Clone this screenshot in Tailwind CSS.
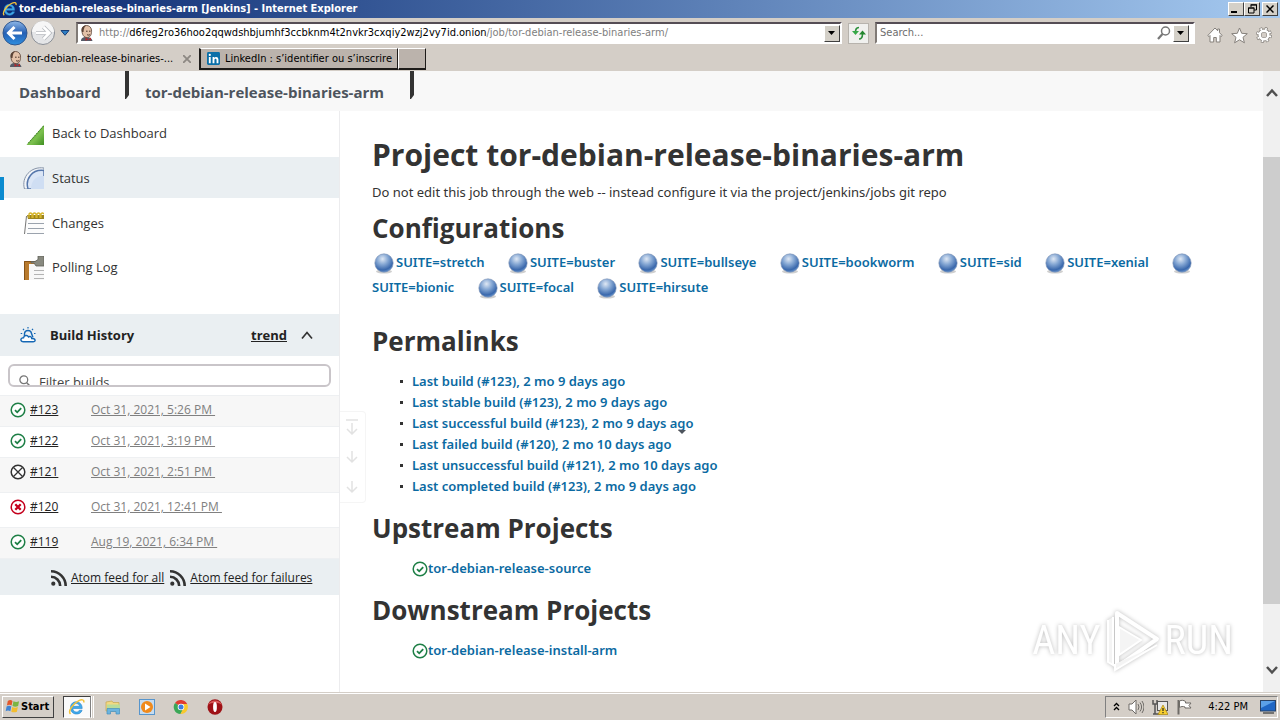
<!DOCTYPE html>
<html lang="en">
  <head>
    <meta charset="UTF-8" />
    <meta name="viewport" content="width=device-width, initial-scale=1.0" />
    <title>tor-debian-release-binaries-arm [Jenkins]</title>
    <!-- Tailwind CSS -->
    <script src="https://cdn.jsdelivr.net/npm/@tailwindcss/browser@4"></script>
  </head>
  <body class="flex h-screen flex-col overflow-hidden bg-white font-['DejaVu_Sans_Condensed','DejaVu_Sans',sans-serif] text-[11px] leading-4 text-black">
    <!-- Shared icons -->
    <svg class="absolute size-0">
      <defs>
        <radialGradient id="ball-fill" cx="0.42" cy="0.28" r="0.75">
          <stop offset="0" stop-color="#dfe8f4" />
          <stop offset="0.4" stop-color="#86a8d4" />
          <stop offset="0.8" stop-color="#3a68ac" />
          <stop offset="1" stop-color="#6d9bd2" />
        </radialGradient>
        <linearGradient id="nav-blue" x1="0" y1="0" x2="0" y2="1">
          <stop offset="0" stop-color="#8fb8e8" />
          <stop offset="0.5" stop-color="#2560b4" />
          <stop offset="1" stop-color="#2f8fe0" />
        </linearGradient>
        <linearGradient id="green-fill" x1="0" y1="0" x2="1" y2="1">
          <stop offset="0" stop-color="#4a9a2c" />
          <stop offset="0.6" stop-color="#7cc04e" />
          <stop offset="1" stop-color="#3f8f22" />
        </linearGradient>
      </defs>
      <symbol id="ball" viewBox="0 0 22 22">
        <ellipse cx="11" cy="19.500" rx="8" ry="2" fill="#cfcfcf" />
        <circle cx="11" cy="11" r="9.200" fill="url(#ball-fill)" stroke="#7f93b5" stroke-width="0.600" />
      </symbol>
      <symbol id="success" viewBox="0 0 16 16">
        <circle cx="8" cy="8" r="6.800" fill="#fff" stroke="#1e7f46" stroke-width="1.500" />
        <path d="M5 8.200l2.200 2.100 4-4.200" fill="none" stroke="#1e7f46" stroke-width="1.800" />
      </symbol>
      <symbol id="aborted" viewBox="0 0 16 16">
        <circle cx="8" cy="8" r="6.800" fill="#fff" stroke="#333" stroke-width="1.500" />
        <path d="M3.500 3.500l9 9M12.500 3.500l-9 9" stroke="#333" stroke-width="1.300" />
      </symbol>
      <symbol id="failed" viewBox="0 0 16 16">
        <circle cx="8" cy="8" r="6.800" fill="#fff" stroke="#c4001d" stroke-width="1.500" />
        <path d="M5.300 5.300l5.400 5.400M10.700 5.300l-5.400 5.400" stroke="#c4001d" stroke-width="2.300" />
      </symbol>
      <symbol id="rss" viewBox="0 0 16 16">
        <circle cx="2.300" cy="13.700" r="2.100" fill="#333" />
        <path d="M0 6.800a9.200 9.200 0 0 1 9.200 9.200M0 1.300a14.700 14.700 0 0 1 14.700 14.700" fill="none" stroke="#333" stroke-width="2.600" />
      </symbol>
      <symbol id="ie" viewBox="0 0 18 18">
        <path d="M14.200 10.500H4.800c.3 4 5.400 4.600 6.600 1.700h2.700c-1.300 5.500-11.600 5.600-11.600-2.500 0-8.200 12-7.800 11.700.8z M5 8.300h6.500c-.4-3.600-6-3.600-6.500 0z" fill="#3fa9ea" stroke="#2b86cc" stroke-width="0.600" fill-rule="evenodd" />
        <path d="M2.500 16C-.5 13.500 5 5.500 10.500 2.800c3-1.500 6-1.500 5.200 1.700" fill="none" stroke="#f3c33c" stroke-width="1.500" />
      </symbol>
      <symbol id="butler" viewBox="0 0 16 16">
        <path d="M2 16c0-3 2-4 5-4 4 0 6 1.500 6.500 4z" fill="#565c68" />
        <path d="M3 5c0-6 9-6 9.500 0 .3 3.500-.5 7-4 7.600C4.500 12.800 2.800 9 3 5z" fill="#e3c1a8" stroke="#5b4336" stroke-width="0.800" />
        <path d="M3 7C1.500 3 4 .5 7.500.6 5.500 1.600 5 3 4.500 7z" fill="#5b4336" />
        <path d="M7 6.200h1.600M10 6.200h1.500M8 9.500c1 .8 2 .8 3 0" stroke="#4b3328" stroke-width="1" fill="none" />
        <path d="M6.500 12.500l3 2 2.500-2v3l-2.500-1-3 1.200z" fill="#b5282c" />
      </symbol>
      <symbol id="caret" viewBox="0 0 8 4">
        <path d="M0 0h7L3.500 4z" fill="#000" />
      </symbol>
    </svg>

    <!-- Title bar -->
    <header class="flex h-[18px] shrink-0 items-center bg-linear-to-r from-[#0c2870] to-[#a6caf0] px-[2px]">
      <svg class="mr-px size-4"><use href="#ie" /></svg>
      <h1 class="grow font-bold text-white">tor-debian-release-binaries-arm [Jenkins] - Internet Explorer</h1>
      <button aria-label="Minimize" class="flex h-[14px] w-4 items-end justify-start border border-t-white border-r-[#404040] border-b-[#404040] border-l-white bg-[#d4d0c8] p-[2px]"><span class="h-[2px] w-[6px] bg-black"></span></button>
      <button aria-label="Restore" class="flex h-[14px] w-4 items-center justify-center border border-t-white border-r-[#404040] border-b-[#404040] border-l-white bg-[#d4d0c8]">
        <svg class="h-[10px] w-[9px] shrink-0" viewBox="0 0 9 10"><path d="M3 3V1h5.500v5H6M2.500.8H9M.5 4h5.500v5H.5zM0 4h6.500" fill="none" stroke="#000" /></svg>
      </button>
      <button aria-label="Close" class="ml-[2px] flex h-[14px] w-4 items-center justify-center border border-t-white border-r-[#404040] border-b-[#404040] border-l-white bg-[#d4d0c8]">
        <svg class="size-2 shrink-0" viewBox="0 0 8 8"><path d="M.5.5l7 7M7.500.5l-7 7" stroke="#000" stroke-width="1.500" /></svg>
      </button>
    </header>

    <!-- Address bar -->
    <div class="flex h-[29px] shrink-0 items-center bg-[#d4cec7] pt-px pr-2 pl-[2px]">
      <button aria-label="Back" class="size-[26px]">
        <svg viewBox="0 0 26 26"><circle cx="13" cy="13" r="12" fill="url(#nav-blue)" stroke="#31588f" /><path d="M20 13H7M12.500 7L6.500 13l6 6" fill="none" stroke="#fff" stroke-width="3" /></svg>
      </button>
      <button aria-label="Forward" class="ml-[2px] size-[26px]">
        <svg viewBox="0 0 26 26"><circle cx="13" cy="13" r="11.500" fill="#e4e5e7" stroke="#8b8f96" /><path d="M2 12a11 11 0 0 1 22 0z" fill="#f6f6f6" /><path d="M6 13h13M13.500 7l6 6-6 6" fill="none" stroke="#b4b7bc" stroke-width="4" /><path d="M6 13h13M13.500 7l6 6-6 6" fill="none" stroke="#fff" stroke-width="2.500" /></svg>
      </button>
      <button aria-label="Recent pages" class="mx-1 w-[10px]">
        <svg viewBox="0 0 10 6"><path d="M1 .5h8L5 5.300z" fill="#2f7fc4" stroke="#173f78" /></svg>
      </button>
      <div class="ml-[2px] flex h-[22px] grow items-center border-2 border-t-[#554d55] border-r-white border-b-white border-l-[#807a76] bg-white">
        <svg class="mx-px size-4 shrink-0"><use href="#butler" /></svg>
        <a href="#" class="grow pl-[3px] whitespace-nowrap text-[#808080]">http://<span class="text-black">d6feg2ro36hoo2qqwdshbjumhf3ccbknm4t2nvkr3cxqiy2wzj2vy7id.onion</span>/job/tor-debian-release-binaries-arm/</a>
        <button aria-label="Show addresses" class="flex h-[17px] w-4 items-center justify-center border border-t-white border-r-[#404040] border-b-[#404040] border-l-white bg-[#d4d0c8]"><svg class="h-1 w-2"><use href="#caret" /></svg></button>
      </div>
      <button aria-label="Refresh" class="mx-[6px] flex size-[21px] items-center justify-center border border-[#b7b3ad] bg-[#f0f0ee]">
        <svg class="size-4" viewBox="0 0 16 16"><path d="M8 2.500C5 2.500 4.500 4.500 4.500 7.500" stroke="#2b8f3a" stroke-width="1.600" fill="none" /><path d="M1 6l3.500 4L8 6z" fill="#35a846" /><path d="M8 14c3 0 3.500-2 3.500-5" stroke="#2b8f3a" stroke-width="1.600" fill="none" /><path d="M8 9.500l3.500-4 3.500 4z" fill="#23862f" /></svg>
      </button>
      <div class="flex h-[22px] w-[320px] items-center border-2 border-t-[#554d55] border-r-white border-b-white border-l-[#807a76] bg-white pr-1">
        <input type="text" aria-label="Search" placeholder="Search..." class="w-0 grow pl-[3px] placeholder:text-[#6d6d6d] outline-none" />
        <svg class="mr-[2px] size-[14px]" viewBox="0 0 14 14"><circle cx="8.500" cy="5" r="4" fill="none" stroke="#777" stroke-width="1.500" /><path d="M5.500 8L1 13" stroke="#777" stroke-width="2.200" /></svg>
        <button aria-label="Search providers" class="flex h-[17px] w-4 items-center justify-center border border-t-white border-r-[#404040] border-b-[#404040] border-l-white bg-[#d4d0c8]"><svg class="h-1 w-2"><use href="#caret" /></svg></button>
      </div>
      <div class="ml-3 flex items-center gap-2 pt-1">
        <button aria-label="Home"><svg class="size-4" viewBox="0 0 16 16"><path d="M8 1L.8 8.500l1.200 1 1-1V15h3.700v-4.500h2.600V15H13V8.500l1 1 1.200-1-2.700-2.800V2h-1.800v1.800z" fill="#fff" stroke="#85807b" /></svg></button>
        <button aria-label="Favorites"><svg class="size-[17px]" viewBox="0 0 17 17"><path d="M8.500 1l2.200 5.300 5.600.4-4.300 3.600 1.400 5.500-4.900-3-4.900 3L5 10.300.7 6.700l5.600-.4z" fill="#fff" stroke="#85807b" /></svg></button>
        <button aria-label="Tools"><svg class="size-4" viewBox="0 0 16 16"><circle cx="8" cy="8" r="6.200" fill="none" stroke="#85807b" stroke-width="3.500" stroke-dasharray="2.600 2.270" /><circle cx="8" cy="8" r="4.500" fill="none" stroke="#85807b" stroke-width="4" /><circle cx="8" cy="8" r="6.200" fill="none" stroke="#fff" stroke-width="2.200" stroke-dasharray="1.600 3.270" stroke-dashoffset="-0.500" /><circle cx="8" cy="8" r="4.300" fill="none" stroke="#fff" stroke-width="2.500" /></svg></button>
      </div>
    </div>

    <!-- Tabs -->
    <nav class="flex h-6 shrink-0 bg-[#d4cec7] pt-px pb-px">
      <div class="flex w-[199px] items-center pr-2 pl-2">
        <svg class="size-4 shrink-0"><use href="#butler" /></svg>
        <a href="#" class="grow pl-[3px] whitespace-nowrap">tor-debian-release-binaries-...</a>
        <button aria-label="Close tab"><svg class="size-2" viewBox="0 0 8 8"><path d="M0 0l8 8M8 0L0 8" stroke="#8d8883" stroke-width="1.800" /></svg></button>
      </div>
      <a href="#" class="flex w-[199px] items-center border-r border-b-2 border-l-2 border-t border-[#1d1b19] border-t-white bg-[#bbb3ac] pl-[6px] whitespace-nowrap">
        <svg class="mr-[5px] size-[13px] shrink-0" viewBox="0 0 14 14"><rect width="14" height="14" rx="1.500" fill="#0a6fa8" /><path d="M2 5.500h2V12H2zM6 5.500h2V12H6zM8 8.500c0-1.800 2.300-1.700 2.300 0V12h2V8c0-3.300-3.600-3.300-4.300-1.500z" fill="#fff" /><circle cx="3" cy="3.200" r="1.200" fill="#fff" /></svg>
        LinkedIn : s’identifier ou s’inscrire
      </a>
      <button aria-label="New tab" class="w-7 border-t border-r border-b-2 border-l border-[#1d1b19] border-t-white border-l-white bg-[#bbb3ac]"></button>
    </nav>

    <!-- Browser viewport -->
    <div class="flex min-h-0 grow font-['Open_Sans',sans-serif] text-[13px] leading-[21px] text-[#333]">
      <div class="flex min-w-0 grow flex-col">
        <nav class="flex h-10 shrink-0 bg-[#f8f8f8] pl-[19px] text-[15px] font-bold text-[#4d545d]">
          <a href="#" class="w-[106px] pt-[11px]">Dashboard</a>
          <svg class="h-7 w-1" viewBox="0 0 4 28"><path d="M0 0h4v24l-3 4H0z" fill="#333" /></svg>
          <a href="#" class="w-[281px] pt-[11px] pl-4 whitespace-nowrap">tor-debian-release-binaries-arm</a>
          <svg class="h-7 w-1" viewBox="0 0 4 28"><path d="M0 0h4v24l-3 4H0z" fill="#333" /></svg>
        </nav>

        <div class="flex min-h-0 grow">
          <!-- Sidebar -->
          <aside class="w-[340px] shrink-0 border-r border-[#ececee]">
            <nav class="flex flex-col gap-1 pt-px">
              <a href="#" class="flex h-[41px] items-center pt-px pl-6">
                <svg class="mt-1 mr-2 size-5" viewBox="0 0 20 20"><path d="M20 0v20H2.500z" fill="url(#green-fill)" /><path d="M19.500 1L3.500 19" stroke="#3a7a22" stroke-dasharray="2 1" /></svg>
                Back to Dashboard
              </a>
              <a href="#" class="relative flex h-[41px] items-center bg-[#eaeff2] pt-px pl-[23px]">
                <span class="absolute top-5 left-0 h-[23px] w-1 bg-[#0b8bd0]"></span>
                <svg class="mr-2 h-[22px] w-[21px]" viewBox="0 0 21 22"><path d="M21 1C8-1-2 10 1.500 22H21z" fill="#f2f5f9" stroke="#8794a8" /><path d="M21 3.500C9 2 2 12 5 22h16z" fill="#dbe6f6" stroke="#5576ab" stroke-width="1.500" /><path d="M21 9c-8-1-13 5-13 13h13z" fill="#cfdef3" /></svg>
                Status
              </a>
              <a href="#" class="flex h-[41px] items-center pt-px pl-6">
                <svg class="mr-2 h-[22px] w-5" viewBox="0 0 20 22"><path d="M2.500 3.500H20V22H.5z" fill="#fcfcfc" /><path d="M2.500 4L.5 22" stroke="#777" /><path d="M4 11.500h16M4 16.500h16M3 21.500h17" stroke="#9ba3ad" /><path d="M3 3h17v4H4z" fill="#9b8420" /><path d="M5 6V2q1.500-2 3 0v4M9 6V2q1.500-2 3 0v4M13 6V2q1.500-2 3 0v4M17 6V2q1.500-2 3 0" fill="none" stroke="#d6b52c" stroke-width="1.300" /></svg>
                Changes
              </a>
              <a href="#" class="flex h-[41px] items-center pl-6">
                <svg class="mr-2 h-6 w-5" viewBox="0 0 20 24"><path d="M0 5h20v19H0z" fill="#b87a2d" /><path d="M.5 24V5.500H12" fill="none" stroke="#865318" /><path d="M5 8h15v16H5z" fill="#f7f7f7" /><path d="M10 14.500h10M10 18.500h10M10 22.500h10" stroke="#b3b3b3" /><path d="M7 5.500h4l3-2V0h6v10h-8l-2-3H7z" fill="#88897f" stroke="#5f6058" stroke-width="0.800" /></svg>
                Polling Log
              </a>
            </nav>

            <!-- Build history -->
            <section class="mt-[26px]">
              <div class="flex h-[42px] items-center bg-[#eaeff2] pr-[26px] pl-5 font-bold text-[#222]">
                <svg class="mr-[14px] size-4" viewBox="0 0 16 16"><path d="M3.500 14.800c-3.500 0-3.500-4 0-4 .4-2.600 4-3.300 5-.8 1.300-1 3.200-.3 3.200 1.500 4.300-.2 4.300 3.300 1.300 3.300z" fill="#fff" stroke="#1668b5" stroke-width="1.400" /><path d="M4.500 9V6.500c.5-4 6.500-4 7 0l1.500 4" fill="none" stroke="#1668b5" stroke-width="1.400" /><path d="M8 0v1.600M3 1.800l1 1.200M13 1.800l-1 1.200M.7 6.500h1.500M14 6.500h1.500" stroke="#1668b5" stroke-width="1.200" /></svg>
                <h2 class="grow">Build History</h2>
                <a href="#" class="underline">trend</a>
                <button aria-label="Collapse" class="ml-[14px]"><svg class="h-3 w-3" viewBox="0 0 12 12"><path d="M1 9.500l5-6 5 6" fill="none" stroke="#333" stroke-width="1.700" /></svg></button>
              </div>
              <label class="mx-2 mt-2 flex h-[23px] overflow-hidden rounded-md border-2 border-[#c9c5c9] pl-[9px]">
                <svg class="mt-[9px] mr-2 size-3 shrink-0" viewBox="0 0 12 12"><circle cx="4.800" cy="4.800" r="3.900" fill="none" stroke="#777" stroke-width="1.300" /><path d="M7.700 7.700L12 12" stroke="#777" stroke-width="1.500" /></svg>
                <input type="text" aria-label="Filter builds" placeholder="Filter builds" class="mt-[6px] h-[21px] grow placeholder:text-[#444] outline-none" />
              </label>
              <table class="mt-2 w-full text-xs">
                <tbody>
                  <tr class="h-[31px] border-y border-[#eef0f2] bg-[#f7f7f7]">
                    <td class="w-[91px] pb-[2px] pl-[10px]"><a href="#" class="flex items-center gap-1 text-[#222] underline"><svg class="size-4"><use href="#success" /></svg>#123</a></td>
                    <td class="pb-[2px]"><a href="#" class="text-[#808080] underline">Oct 31, 2021, 5:26 PM&nbsp;</a></td>
                  </tr>
                  <tr class="h-[31px] border-y border-[#eef0f2]">
                    <td class="pb-[2px] pl-[10px]"><a href="#" class="flex items-center gap-1 text-[#222] underline"><svg class="size-4"><use href="#success" /></svg>#122</a></td>
                    <td class="pb-[2px]"><a href="#" class="text-[#808080] underline">Oct 31, 2021, 3:19 PM&nbsp;</a></td>
                  </tr>
                  <tr class="h-[35px] border-y border-[#eef0f2] bg-[#f7f7f7]">
                    <td class="pb-[6px] pl-[10px]"><a href="#" class="flex items-center gap-1 text-[#222] underline"><svg class="size-4"><use href="#aborted" /></svg>#121</a></td>
                    <td class="pb-[6px]"><a href="#" class="text-[#808080] underline">Oct 31, 2021, 2:51 PM&nbsp;</a></td>
                  </tr>
                  <tr class="h-[35px] border-y border-[#eef0f2]">
                    <td class="pb-[6px] pl-[10px]"><a href="#" class="flex items-center gap-1 text-[#222] underline"><svg class="size-4"><use href="#failed" /></svg>#120</a></td>
                    <td class="pb-[6px]"><a href="#" class="text-[#808080] underline">Oct 31, 2021, 12:41 PM&nbsp;</a></td>
                  </tr>
                  <tr class="h-[31px] border-y border-[#eef0f2] bg-[#f7f7f7]">
                    <td class="pb-[2px] pl-[10px]"><a href="#" class="flex items-center gap-1 text-[#222] underline"><svg class="size-4"><use href="#success" /></svg>#119</a></td>
                    <td class="pb-[2px]"><a href="#" class="text-[#808080] underline">Aug 19, 2021, 6:34 PM&nbsp;</a></td>
                  </tr>
                </tbody>
              </table>
              <div class="flex h-9 items-center gap-[6px] bg-[#eaeff2] pt-[2px] pl-[51px] text-xs font-medium text-[#222]">
                <a href="#" class="flex items-center gap-1 whitespace-nowrap underline"><svg class="size-4"><use href="#rss" /></svg>Atom feed for all</a>
                <a href="#" class="flex items-center gap-1 whitespace-nowrap underline"><svg class="size-4"><use href="#rss" /></svg>Atom feed for failures</a>
              </div>
            </section>
          </aside>

          <!-- Project page -->
          <main class="relative min-w-0 grow px-8 pt-6 font-['Noto_Sans','Open_Sans',sans-serif]">
            <!-- Build history paging -->
            <div class="absolute top-[300px] left-0 flex h-[92px] w-[26px] flex-col items-center justify-around rounded-r border border-l-0 border-[#f5f5f5] bg-white pr-[2px]">
              <button aria-label="Newest"><svg class="size-4" viewBox="0 0 16 16"><path d="M2 1h12M8 4v11M3 10l5 5 5-5" fill="none" stroke="#e2e2e2" stroke-width="1.500" /></svg></button>
              <button aria-label="Newer"><svg class="size-4" viewBox="0 0 16 16"><path d="M8 2v11M3 8l5 5 5-5" fill="none" stroke="#e2e2e2" stroke-width="1.500" /></svg></button>
              <button aria-label="Older"><svg class="size-4" viewBox="0 0 16 16"><path d="M8 2v11M3 8l5 5 5-5" fill="none" stroke="#e2e2e2" stroke-width="1.500" /></svg></button>
            </div>

            <h1 class="font-['Open_Sans',sans-serif] text-[30px] leading-10 font-bold">Project tor-debian-release-binaries-arm</h1>
            <p class="mt-[7px]">Do not edit this job through the web -- instead configure it via the project/jenkins/jobs git repo</p>

            <h2 class="mt-[7px] font-['Open_Sans',sans-serif] text-[26px] leading-9 font-bold">Configurations</h2>
            <p class="mt-1 leading-[25px] font-semibold text-[#0b6aa2]">
              <svg class="mx-px inline size-[22px]"><use href="#ball" /></svg><a href="#" class="mr-[18px]">SUITE=stretch</a>
              <svg class="mx-px inline size-[22px]"><use href="#ball" /></svg><a href="#" class="mr-[18px]">SUITE=buster</a>
              <svg class="mx-px inline size-[22px]"><use href="#ball" /></svg><a href="#" class="mr-[18px]">SUITE=bullseye</a>
              <svg class="mx-px inline size-[22px]"><use href="#ball" /></svg><a href="#" class="mr-[18px]">SUITE=bookworm</a>
              <svg class="mx-px inline size-[22px]"><use href="#ball" /></svg><a href="#" class="mr-[18px]">SUITE=sid</a>
              <svg class="mx-px inline size-[22px]"><use href="#ball" /></svg><a href="#" class="mr-[18px]">SUITE=xenial</a>
              <svg class="mx-px inline size-[22px]"><use href="#ball" /></svg><a href="#" class="mr-[18px]">SUITE=bionic</a>
              <svg class="mx-px inline size-[22px]"><use href="#ball" /></svg><a href="#" class="mr-[18px]">SUITE=focal</a>
              <svg class="mx-px inline size-[22px]"><use href="#ball" /></svg><a href="#">SUITE=hirsute</a>
            </p>

            <h2 class="mt-[23px] font-['Open_Sans',sans-serif] text-[26px] leading-9 font-bold">Permalinks</h2>
            <ul class="mt-3 font-semibold text-[#0b6aa2]">
              <li class="flex items-center"><span class="mr-[9px] ml-7 size-[3px] bg-[#333]"></span><a href="#">Last build (#123), 2 mo 9 days ago</a></li>
              <li class="flex items-center"><span class="mr-[9px] ml-7 size-[3px] bg-[#333]"></span><a href="#">Last stable build (#123), 2 mo 9 days ago</a></li>
              <li class="flex items-center"><span class="mr-[9px] ml-7 size-[3px] bg-[#333]"></span><a href="#" class="relative">Last successful build (#123), 2 mo 9 days ago<svg class="absolute right-2 bottom-0 h-1 w-2" viewBox="0 0 8 4"><path d="M0 0h8L4 4z" fill="#4d545d" /></svg></a></li>
              <li class="flex items-center"><span class="mr-[9px] ml-7 size-[3px] bg-[#333]"></span><a href="#">Last failed build (#120), 2 mo 10 days ago</a></li>
              <li class="flex items-center"><span class="mr-[9px] ml-7 size-[3px] bg-[#333]"></span><a href="#">Last unsuccessful build (#121), 2 mo 10 days ago</a></li>
              <li class="flex items-center"><span class="mr-[9px] ml-7 size-[3px] bg-[#333]"></span><a href="#">Last completed build (#123), 2 mo 9 days ago</a></li>
            </ul>

            <h2 class="mt-[13px] font-['Open_Sans',sans-serif] text-[26px] leading-9 font-bold">Upstream Projects</h2>
            <a href="#" class="mt-3 ml-10 flex items-center font-semibold text-[#0b6aa2]"><svg class="size-4"><use href="#success" /></svg>tor-debian-release-source</a>

            <h2 class="mt-[13px] font-['Open_Sans',sans-serif] text-[26px] leading-9 font-bold">Downstream Projects</h2>
            <a href="#" class="mt-3 ml-10 flex items-center font-semibold text-[#0b6aa2]"><svg class="size-4"><use href="#success" /></svg>tor-debian-release-install-arm</a>

            <!-- Watermark -->
            <div class="absolute right-[30px] bottom-5 flex items-center gap-1 font-['Roboto_Condensed','Liberation_Sans_Narrow','Liberation_Sans',sans-serif] text-[40px] leading-[60px] text-white drop-shadow-[0_0_2px_#bbb]">
              <span>ANY</span>
              <svg class="h-[62px] w-14" viewBox="0 0 56 62"><path d="M12 3l40 26-40 28z" fill="none" stroke="#fff" stroke-width="4" stroke-linejoin="round" /><path d="M3 10v42l5 3V7M14 17l22 13-22 15zM10 54v6l42-25" fill="#f4f4f4" stroke="#fff" stroke-width="2" /></svg>
              <span>RUN</span>
            </div>
          </main>
        </div>
      </div>

      <!-- Scroll bar -->
      <div class="flex w-[17px] shrink-0 flex-col items-center bg-[#f0f0f0] py-4">
        <svg class="h-3 w-3 shrink-0" viewBox="0 0 12 12"><path d="M1 9l5-5.500L11 9" fill="none" stroke="#505050" stroke-width="2.500" /></svg>
        <div class="mt-[58px] mb-[60px] w-full grow bg-[#cdcdcd]"></div>
        <svg class="h-3 w-3 shrink-0" viewBox="0 0 12 12"><path d="M1 3l5 5.500L11 3" fill="none" stroke="#505050" stroke-width="2.500" /></svg>
      </div>
    </div>

    <!-- Taskbar -->
    <footer class="flex h-7 shrink-0 items-center border-t border-[#d4cec7] bg-[#d4cec7] px-[2px] shadow-[inset_0_1px_0_#fff]">
      <button class="flex h-[22px] w-[52px] items-center border border-t-white border-r-[#404040] border-b-[#404040] border-l-white pl-[2px] font-bold">
        <svg class="mr-px size-[15px] shrink-0" viewBox="0 0 16 16"><path d="M3 2c2-1.200 3.500-1 5 0L7 7c-1.500-1-3.500-1-5 0z" fill="#e2582c" /><path d="M9 2.500c2 1 4 1 6 0L14 7.500c-2 1-4 1-6 0z" fill="#7bb543" /><path d="M1.700 8c1.500-1 3.500-1 5 0l-1 5c-1.500-1-3.500-1-5 0z" fill="#3f84d4" /><path d="M7.700 8.500c2 1 4 1 6 0l-1 5c-2 1-4 1-6 0z" fill="#f3bd2f" /></svg>
        Start
      </button>
      <button aria-label="Internet Explorer" class="ml-[9px] flex h-[22px] w-7 items-center justify-center border border-t-[#404040] border-r-[#808080] border-b-white border-l-[#404040] bg-[#fafafa]"><svg class="size-[18px]"><use href="#ie" /></svg></button>
      <span class="h-[22px] w-[3px] border-x border-white"></span>
      <div class="ml-[11px] flex gap-[18px]">
        <button aria-label="Explorer"><svg class="size-4" viewBox="0 0 16 16"><path d="M1 3l6-1 1 1.500h6V12H1z" fill="#f2d982" stroke="#c4a650" stroke-width="0.700" /><path d="M2 5.500h13V10H2z" fill="#b9dc9b" /><path d="M2 15V9.500h12.500V15H11v-2.500H5.500V15z" fill="#6bb4df" stroke="#4690bd" stroke-width="0.700" /></svg></button>
        <button aria-label="Media Player"><svg class="size-4" viewBox="0 0 16 16"><rect x="0.500" y="0.500" width="15" height="15" fill="#c6dcf0" stroke="#5795cc" /><circle cx="8" cy="8" r="6" fill="#f08a1c" /><path d="M6 4.500L11.500 8 6 11.500z" fill="#fff" /></svg></button>
        <button aria-label="Chrome"><svg class="size-4" viewBox="0 0 16 16"><path d="M8 8L2 4a7 7 0 0 1 12.200 1H8z" fill="#e03c31" /><path d="M2 4a7 7 0 0 0 5.500 11l3-5.500L8 8z" fill="#3ba757" /><path d="M14.200 5A7 7 0 0 1 7.500 15L11 8 8 5z" fill="#f9c92d" /><circle cx="8" cy="8" r="3.300" fill="#fff" /><circle cx="8" cy="8" r="2.500" fill="#3d7de0" /></svg></button>
        <button aria-label="Opera"><svg class="size-4" viewBox="0 0 16 16"><ellipse cx="8" cy="8" rx="7.500" ry="7.700" fill="#9e1116" /><path d="M1 6c2-6 12-6 14 0-3-3-11-3-14 0z" fill="#d95a5a" /><ellipse cx="8" cy="8" rx="1.900" ry="5" fill="#fff" /></svg></button>
      </div>
      <div class="ml-auto flex h-[22px] items-center border border-t-[#808080] border-r-white border-b-white border-l-[#808080] pr-px pl-[6px]">
        <button aria-label="Show hidden icons"><svg class="size-[9px]" viewBox="0 0 9 9"><path d="M2 4l2.500-2.500L7 4M2 8l2.500-2.500L7 8" fill="none" stroke="#000" stroke-width="1.300" /></svg></button>
        <div class="ml-[7px] flex gap-2">
          <button aria-label="Volume"><svg class="size-4" viewBox="0 0 16 16"><path d="M1 5h3l4-4v14l-4-4H1z" fill="#fff" stroke="#6e6b67" /><path d="M10 5q2 3 0 6M12 3.500q3.200 4.500 0 9M14 2q4 6 0 12" fill="none" stroke="#6e6b67" /></svg></button>
          <button aria-label="Network"><svg class="size-4" viewBox="0 0 16 16"><rect x="5.500" y="2.500" width="10" height="9" fill="#e8e8e8" stroke="#555" /><path d="M1 1v4h4V1M3 5v10M1 15h7" fill="none" stroke="#555" stroke-width="1.500" /><path d="M11 6l5 9.500H6z" fill="#f7cf2f" stroke="#a98510" stroke-width="0.700" /><path d="M11 9v3M11 13v1.200" stroke="#222" stroke-width="1.200" /></svg></button>
          <button aria-label="Action Center"><svg class="size-4" viewBox="0 0 16 16"><path d="M2.500 1v14.500" stroke="#6e6b67" stroke-width="2" /><path d="M3.500 2c2-1 4-1 6 .5V4h5.500l-2 2.500 2 2.500H9V8C7 7 5 7.500 3.500 8.500z" fill="#fff" stroke="#6e6b67" /></svg></button>
        </div>
        <time class="mr-3 ml-4">4:22 PM</time>
        <button aria-label="Show desktop"><svg class="size-4" viewBox="0 0 16 16"><rect x="0.500" y="1.500" width="15" height="10.500" fill="#1f66c4" stroke="#284266" /><path d="M1 2h14L1 9z" fill="#5ba0e8" /><path d="M3 14h11" stroke="#555" stroke-width="1.500" /></svg></button>
      </div>
    </footer>
  </body>
</html>
